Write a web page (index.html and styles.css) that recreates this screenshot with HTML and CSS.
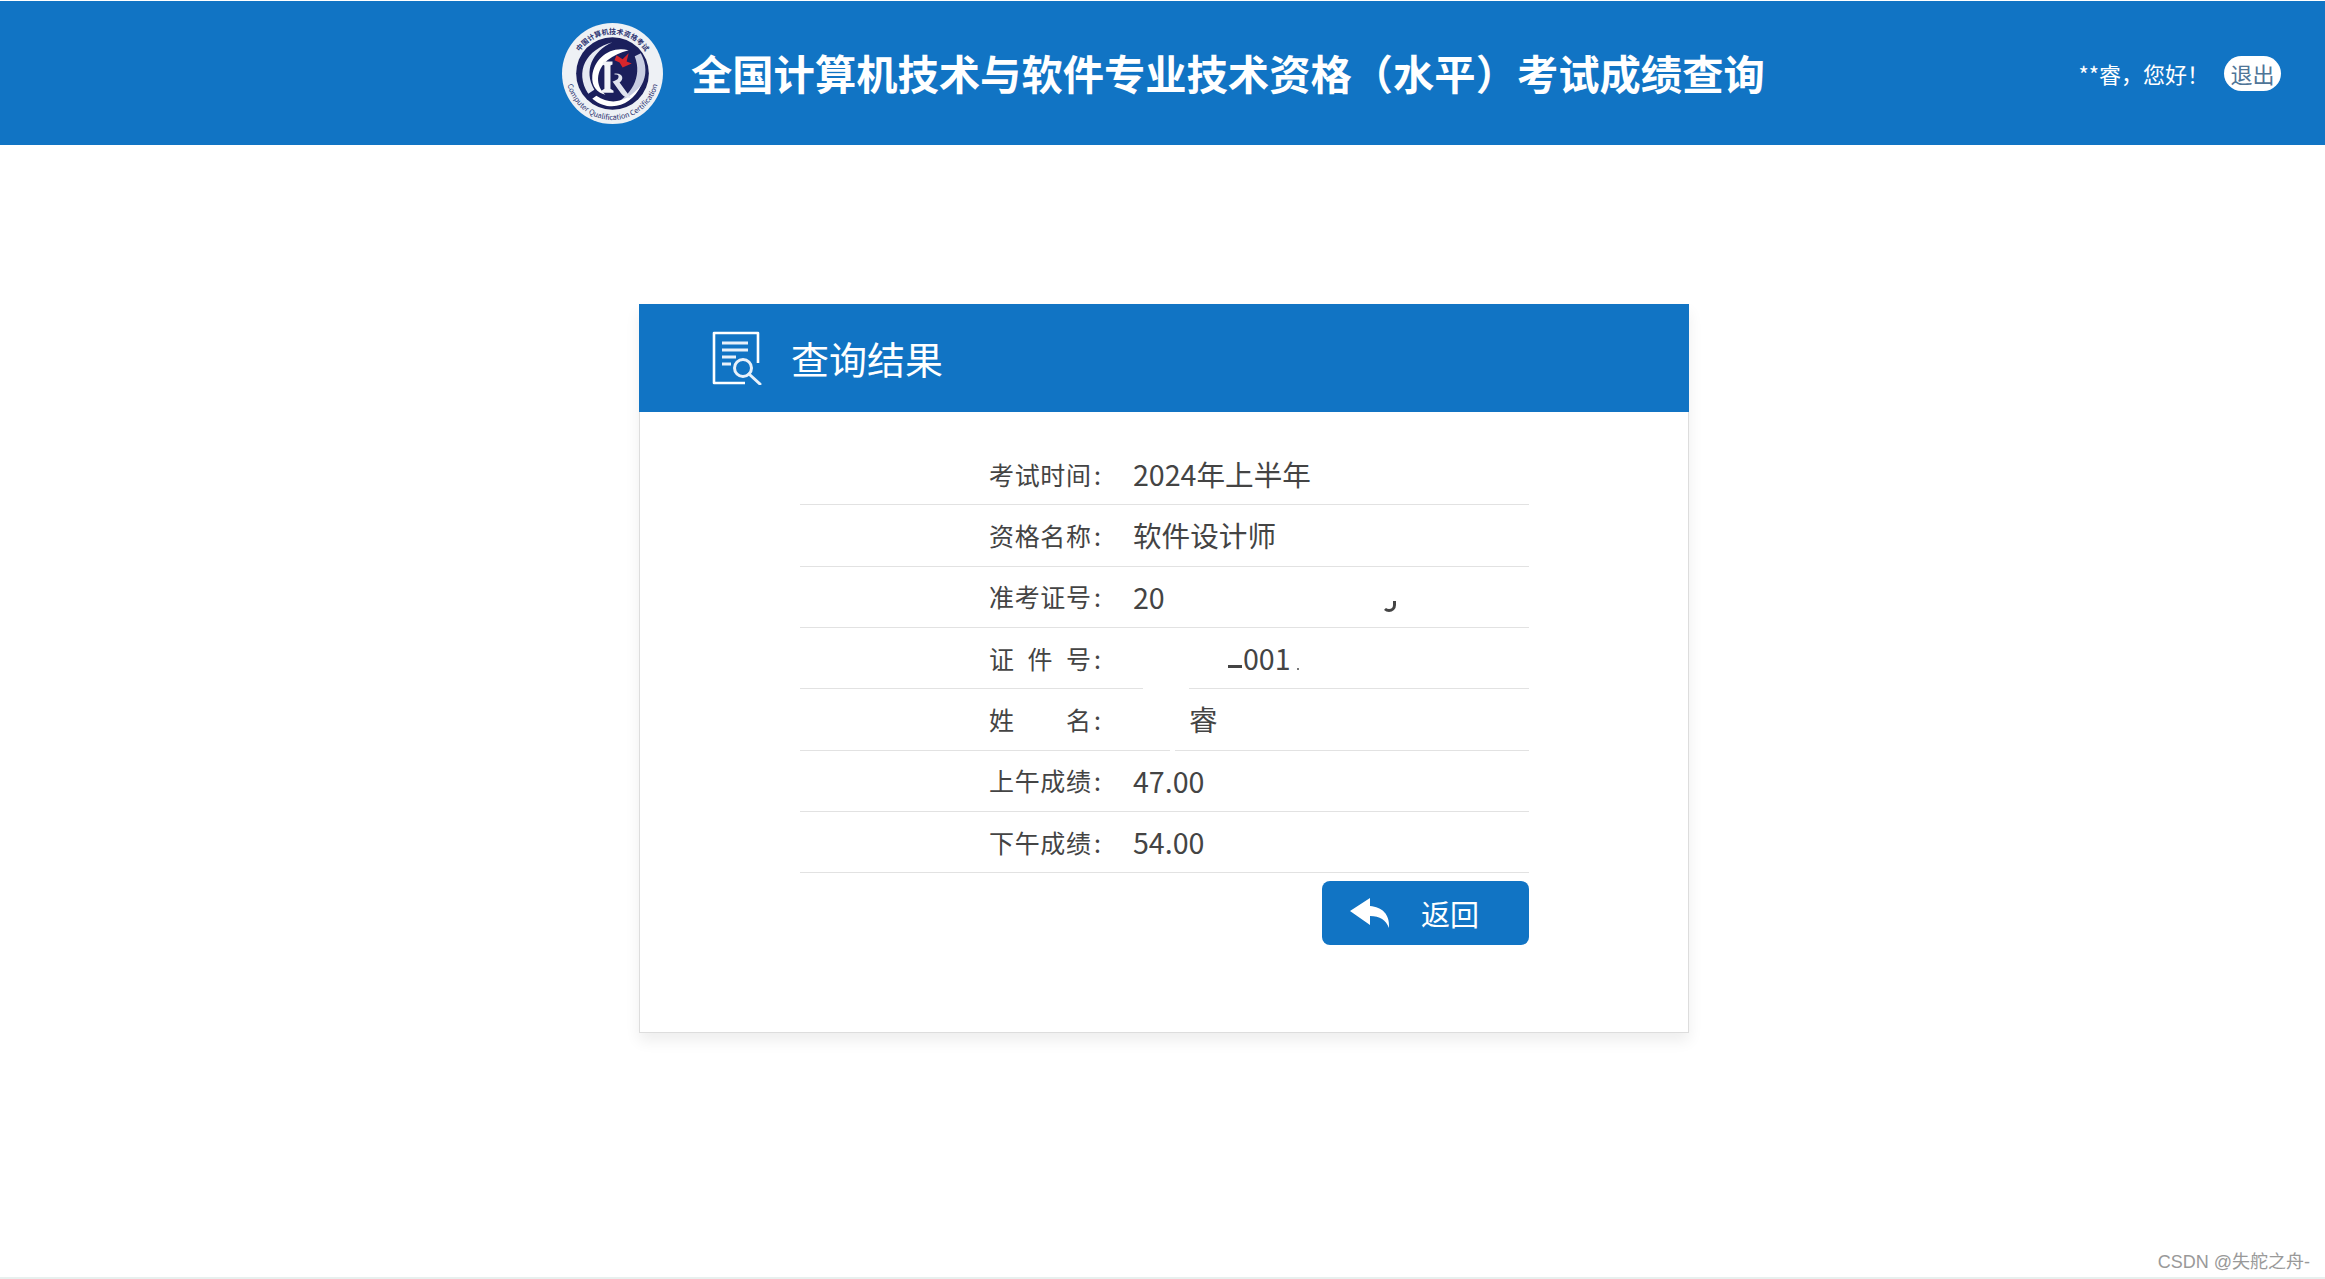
FILE: index.html
```html
<!DOCTYPE html>
<html lang="zh-CN">
<head>
  <meta charset="UTF-8">
  <title>全国计算机技术与软件专业技术资格（水平）考试成绩查询</title>
  <link rel="stylesheet" href="styles.css">
</head>
<body>
  <header class="top-bar">
    <svg class="logo" viewBox="0 0 100 100" aria-hidden="true">
      <defs>
        <path id="ringTop" d="M11 50a39 39 0 0 1 78 0"/>
        <path id="ringBottom" d="M4 50a46 46 0 0 0 92 0"/>
      </defs>
      <circle cx="50" cy="50" r="50" fill="#eef1f5"/>
      <circle cx="50" cy="50" r="36" fill="#1b1f5c"/>
      <text class="logo-cn"><textPath href="#ringTop" startOffset="50%" text-anchor="middle">中国计算机技术资格考试</textPath></text>
      <text class="logo-en"><textPath href="#ringBottom" startOffset="50%" text-anchor="middle">Computer Qualification Certification</textPath></text>
      <path d="M26 70C12 48 24 26 50 19c-20 9-29 28-18 47z" fill="#e6e9f2"/>
      <path d="M78 30c12 22 0 44-28 52 18-10 30-28 22-49z" fill="#c8cde2"/>
      <path d="M34 72c16 11 32 5 44-10-8 19-30 28-48 13z" fill="#fff"/>
      <path d="M66 27C48 22 32 35 30 52c-1 11 5 17 13 19C33 63 33 47 45 37c6-5 13-8 21-10z" fill="#fff"/>
      <path d="M41 38h9v3l-2 1v23l3 2v2H39v-2l3-2V42l-2-1z" fill="#f1f3f7"/>
      <path d="M52 50c8-1 10 5 5 9l11 15c-5 0-8-2-10-5l-8-11c3-1 6-2 6-5 0-2-2-2-4-2z" fill="#dfe3ee"/>
      <path d="M54 32l6 4 6-6-2 8 5 2-9 4-3-5-5-2z" fill="#d8262c"/>
    </svg>
    <h1 class="site-title">全国计算机技术与软件专业技术资格（水平）考试成绩查询</h1>
    <div class="user-box">
      <span class="greeting">**睿，您好！</span>
      <a class="logout" href="#">退出</a>
    </div>
  </header>

  <main class="page-body">
    <section class="result-card">
      <div class="card-head">
        <svg class="head-icon" viewBox="0 0 50 54" aria-hidden="true">
          <path d="M33 52H2V2h44v30" fill="none" stroke="#fff" stroke-width="2.6" stroke-linejoin="round"/>
          <path d="M10 12h26M10 19h26M10 26h14M10 33h9" stroke="#e8f1fa" stroke-width="3" fill="none"/>
          <circle cx="31" cy="37" r="8.5" fill="none" stroke="#e8f1fa" stroke-width="3"/>
          <path d="M37 43l11 10" stroke="#e8f1fa" stroke-width="3" stroke-linecap="round"/>
        </svg>
        <h2 class="card-title">查询结果</h2>
      </div>

      <div class="card-body">
        <div class="row">
          <span class="label"><span class="label-text">考试时间</span>:</span>
          <span class="value">2024年上半年</span>
        </div>
        <div class="row">
          <span class="label"><span class="label-text">资格名称</span>:</span>
          <span class="value">软件设计师</span>
        </div>
        <div class="row">
          <span class="label"><span class="label-text">准考证号</span>:</span>
          <span class="value">20</span>
          <span class="scrap-hook"></span>
        </div>
        <div class="row row-gap-a">
          <span class="label"><span class="label-text">证件号</span>:</span>
          <span class="value value-id"><span class="scrap-dash"></span>001<span class="scrap-dot"></span></span>
        </div>
        <div class="row row-gap-b">
          <span class="label"><span class="label-text">姓名</span>:</span>
          <span class="value value-name">睿</span>
        </div>
        <div class="row">
          <span class="label"><span class="label-text">上午成绩</span>:</span>
          <span class="value">47.00</span>
        </div>
        <div class="row">
          <span class="label"><span class="label-text">下午成绩</span>:</span>
          <span class="value">54.00</span>
        </div>

        <div class="actions">
          <a class="back-btn" href="#">
            <svg class="back-icon" viewBox="0 0 40 30" aria-hidden="true">
              <path fill="#fff" d="M0 13 20 0V8C32 9 40 16 39 30 36 22 30 18 20 18V27Z"/>
            </svg>
            <span>返回</span>
          </a>
        </div>
      </div>
    </section>
  </main>

  <footer class="page-foot">CSDN @失舵之舟-</footer>
</body>
</html>
```

FILE: styles.css
```css
:root {
  --blue: #1174c4;
  --line: #e2e2e2;
  --text: #444;
}
* { margin: 0; padding: 0; box-sizing: border-box; }
html, body { height: 100%; }
body {
  background: #fff;
  color: var(--text);
  font-family: "Noto Sans CJK SC", "Noto Sans", sans-serif;
  display: flex;
  flex-direction: column;
  min-height: 100vh;
  padding-top: 1px;
}
a { text-decoration: none; }

/* top bar */
.top-bar {
  height: 144px;
  background: var(--blue);
  display: flex;
  align-items: center;
  padding: 0 44px 0 562px;
  color: #fff;
  flex-shrink: 0;
}
.logo { width: 101px; height: 101px; margin-right: 28px; flex-shrink: 0; }
.logo-cn { font-size: 7px; font-weight: 700; fill: #2a3270; }
.logo-en { font-size: 7.2px; fill: #2a3270; }
.site-title {
  font-size: 41.3px;
  font-weight: 700;
  line-height: 1;
  white-space: nowrap;
}
.user-box { margin-left: auto; display: flex; align-items: center; gap: 15px; }
.greeting { font-size: 22px; }
.logout {
  width: 57px;
  height: 35px;
  line-height: 35px;
  border-radius: 18px;
  background: #fff;
  color: #4f7597;
  font-size: 22px;
  text-align: center;
}

/* card */
.page-body { flex: 1; padding: 159px 0 0 639px; }
.result-card {
  width: 1050px;
  height: 729px;
  background: #fff;
  border: 1px solid #ddd;
  border-top: 0;
  box-shadow: 0 8px 14px rgba(0, 0, 0, 0.07);
}
.card-head {
  height: 108px;
  margin: 0 -1px;
  background: var(--blue);
  display: flex;
  align-items: center;
  padding-left: 73px;
  color: #fff;
}
.head-icon { width: 50px; height: 54px; margin-right: 29px; }
.card-title { font-size: 38px; font-weight: 400; line-height: 1; }

.card-body { padding: 32px 159px 0 160px; }
.row {
  position: relative;
  height: 61.33px;
  display: flex;
  align-items: center;
  border-bottom: 1px solid var(--line);
}
.label {
  display: flex;
  width: 333px;
  padding-left: 189px;
  font-size: 25px;
  line-height: 1;
  flex-shrink: 0;
}
.label-text { width: 102px; margin-right: 3px; text-align-last: justify; }
.value { font-size: 28.6px; line-height: 1; white-space: nowrap; }
.value-id { padding-left: 95px; }
.value-name { padding-left: 56px; }

/* what is left of the blanked-out numbers */
.scrap-hook {
  position: absolute;
  left: 582px;
  top: 34px;
  width: 14px;
  height: 11px;
  border: 3px solid var(--text);
  border-top: 0;
  border-left-color: transparent;
  border-radius: 0 0 8px 8px;
}
.scrap-dash {
  display: inline-block;
  width: 14px;
  height: 3px;
  margin: 0 1px 2px 0;
  background: var(--text);
  vertical-align: baseline;
}
.scrap-dot {
  display: inline-block;
  width: 2px;
  height: 2px;
  margin-left: 6px;
  background: #777;
  vertical-align: baseline;
}
.row-gap-a::after,
.row-gap-b::after {
  content: "";
  position: absolute;
  bottom: -1px;
  height: 1px;
  background: #fff;
}
.row-gap-a::after { left: 343px; width: 46px; }
.row-gap-b::after { left: 370px; width: 5px; }

.actions { display: flex; justify-content: flex-end; margin-top: 8px; }
.back-btn {
  width: 207px;
  height: 64px;
  border-radius: 8px;
  background: var(--blue);
  color: #fff;
  font-size: 29px;
  display: flex;
  align-items: center;
  padding-left: 28px;
}
.back-icon { width: 40px; height: 30px; margin-right: 31px; }

/* bottom */
.page-foot {
  flex-shrink: 0;
  height: 40px;
  padding: 8px 15px 0 0;
  margin-top: auto;
  text-align: right;
  font-family: "Liberation Sans", "Noto Sans CJK SC", sans-serif;
  font-size: 18px;
  line-height: 30px;
  color: #999;
  border-bottom: 2px solid #e8f0ee;
}
```
